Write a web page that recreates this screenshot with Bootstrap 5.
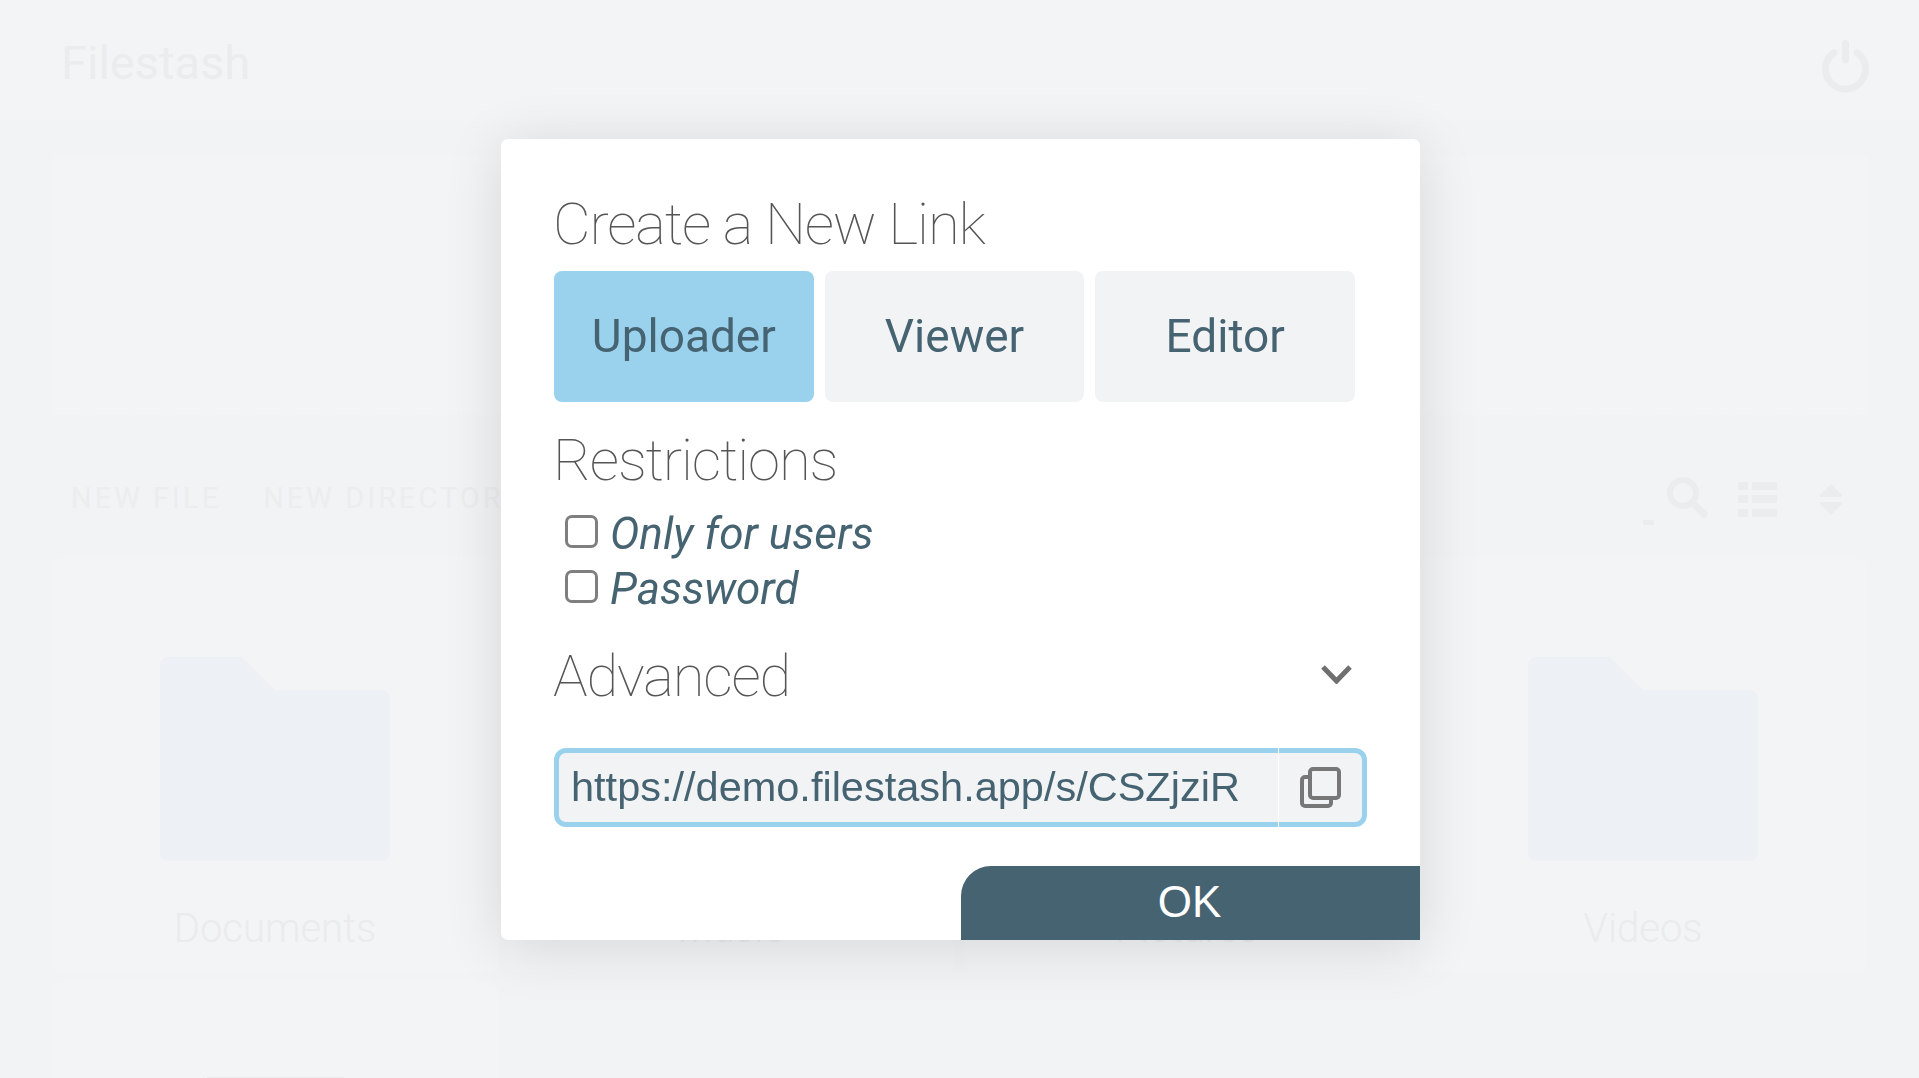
<!DOCTYPE html>
<html lang="en">
<head>
    <meta charset="UTF-8">
    <meta name="viewport" content="width=device-width, initial-scale=1.0">
    <title>Filestash</title>
    <link rel="stylesheet" href="https://cdn.jsdelivr.net/npm/bootstrap@5.3.0/dist/css/bootstrap.min.css">
    <style>
        html, body { height: 100%; overflow: hidden; }
        body { background: #f2f3f5; font-family: Roboto, "Liberation Sans", sans-serif; }

        /* page behind the dialog */
        .top-bar { height: 121px; padding: 3px 50px 0 61px; background: #f3f4f6; color: #ebecee; font-size: 47px; line-height: 1; }
        .power-pic { margin-top: 8px; }
        .page-wrap { padding: 33px 48px 0 47px; }
        .drop-zone { height: 262px; margin: 0 1px 0 3px; background: #f3f4f6; border: 2px dashed #f2f3f5; border-radius: 8px; }
        .tool-row { height: 142px; padding: 68px 29px 0 24px; color: #ecedef; }
        .tool-link { font-size: 29px; letter-spacing: 3px; line-height: 1; margin-right: 42px; white-space: nowrap; }
        .dash-mark { width: 11px; height: 5px; background: #ebecee; border-radius: 1px; margin: 36px 13px 0 0; }
        .search-pic { margin: -7px 30px 0 0; }
        .list-pic { margin-top: -2px; }
        .sort-pic { margin: 0 0 0 43px; }
        .tile { height: 414px; background: #f3f4f6; border-radius: 8px; margin: 0 5px 10px; padding-top: 99px; text-align: center; color: #eaebed; font-size: 40px; font-weight: 300; line-height: 1.2; }
        .tile-low { height: 300px; padding-top: 95px; }
        .folder-pic { display: block; margin: 0 auto 44px; width: 230px; height: 204px; }
        .file-strip { height: 1px; width: 137px; margin: 0 auto; background: #e9eaec; }

        /* dialog */
        .link-modal { display: block; background: transparent; }
        .link-dialog { margin: 139px auto 0; max-width: 919px; left: 1px; }
        .link-box { height: 801px; border: 0; border-radius: 7px 7px 0 7px; background: #fff; box-shadow: 0 8px 60px rgba(0,0,0,.12); padding: 0 53px; overflow: hidden; }
        .sec-title { font-size: 58px; font-weight: 100; line-height: 59px; letter-spacing: -1.15px; color: #555; margin: 0 0 0 -1px; }
        .first-title { margin-top: 56px; }
        .tab-row { gap: 11px; margin: 17px 12px 29px 0; }
        .tab-btn { flex: 1 1 0; height: 131px; border: 0; border-radius: 8px; background: #f2f3f5; color: #466372; font-size: 46px; padding: 0; }
        .tab-btn.is-on, .tab-btn:hover { background: #9ad1ed; color: #466372; }
        .check-list { margin: 16px 0 0 11px; }
        .check-line { height: 55px; font-size: 44px; font-style: italic; color: #466372; gap: 12px; }
        .check-line input { appearance: none; width: 33px; height: 33px; border: 3px solid #7f7f7f; border-radius: 7px; background: #fff; margin: -4px 0 0; }
        .adv-head { margin: 31px 15px 0 0; }
        .adv-head svg { margin-top: -5px; }
        .url-box { margin-top: 42px; height: 79px; border: 5px solid #9ad1ed; border-radius: 12px; background: #f2f3f5; }
        .url-input { flex: 1 1 0; min-width: 0; border: 0; background: transparent; color: #466372; font-family: "Liberation Sans", sans-serif; font-size: 41.5px; padding: 0 0 0 12px; outline: 0; }
        .copy-cell { width: 84px; margin: -5px 0; border-left: 1px solid #fff; }
        .ok-btn { position: absolute; right: 0; bottom: 0; width: 459px; height: 74px; border: 0; border-radius: 30px 0 0 0; background: #466372; color: #fff; font-family: "Liberation Sans", sans-serif; font-size: 44px; line-height: 1; padding: 0 2px 2px 0; }
    </style>
</head>
<body>
    <header class="top-bar d-flex justify-content-between align-items-center">
        <span>Filestash</span>
        <svg class="power-pic" width="47" height="53" viewBox="0 0 47 53" fill="none" stroke="#ebecee" stroke-width="7" stroke-linecap="round">
            <path d="M23.500 3.500V20"/>
            <path d="M12 12.600A20 20 0 1 0 35 12.600"/>
        </svg>
    </header>

    <div class="page-wrap">
        <div class="drop-zone"></div>

        <div class="tool-row d-flex align-items-start">
            <span class="tool-link">NEW FILE</span>
            <span class="tool-link">NEW DIRECTORY</span>
            <span class="dash-mark ms-auto"></span>
            <svg class="search-pic" width="41" height="41" viewBox="0 0 41 41" fill="none" stroke="#ebecee" stroke-linecap="round">
                <circle cx="16" cy="16" r="13" stroke-width="6"/>
                <path d="M28 28l9 9" stroke-width="7"/>
            </svg>
            <svg class="list-pic" width="39" height="35" viewBox="0 0 39 35" fill="#ebecee">
                <rect y="0" width="10" height="8" rx="1"/><rect x="14" y="0" width="25" height="8" rx="1"/>
                <rect y="13" width="10" height="8" rx="1"/><rect x="14" y="13" width="25" height="8" rx="1"/>
                <rect y="27" width="10" height="8" rx="1"/><rect x="14" y="27" width="25" height="8" rx="1"/>
            </svg>
            <svg class="sort-pic" width="22" height="31" viewBox="0 0 22 31" fill="#ebecee">
                <path d="M11 0l11 11q.5 2-1 2H1q-1.500 0-1-2z"/>
                <path d="M11 31L0 20q-.5-2 1-2h20q1.500 0 1 2z"/>
            </svg>
        </div>

        <div class="row g-0">
            <div class="col-3"><div class="tile">
                <svg class="folder-pic" viewBox="0 0 230 204"><path d="M8 0h74l33 33h107a8 8 0 0 1 8 8v155a8 8 0 0 1-8 8H8a8 8 0 0 1-8-8V8a8 8 0 0 1 8-8z" fill="#edf0f4"/></svg>
                Documents
            </div></div>
            <div class="col-3"><div class="tile">
                <svg class="folder-pic" viewBox="0 0 230 204"><path d="M8 0h74l33 33h107a8 8 0 0 1 8 8v155a8 8 0 0 1-8 8H8a8 8 0 0 1-8-8V8a8 8 0 0 1 8-8z" fill="#edf0f4"/></svg>
                Music
            </div></div>
            <div class="col-3"><div class="tile">
                <svg class="folder-pic" viewBox="0 0 230 204"><path d="M8 0h74l33 33h107a8 8 0 0 1 8 8v155a8 8 0 0 1-8 8H8a8 8 0 0 1-8-8V8a8 8 0 0 1 8-8z" fill="#edf0f4"/></svg>
                Pictures
            </div></div>
            <div class="col-3"><div class="tile">
                <svg class="folder-pic" viewBox="0 0 230 204"><path d="M8 0h74l33 33h107a8 8 0 0 1 8 8v155a8 8 0 0 1-8 8H8a8 8 0 0 1-8-8V8a8 8 0 0 1 8-8z" fill="#edf0f4"/></svg>
                Videos
            </div></div>
            <div class="col-3"><div class="tile tile-low"><div class="file-strip"></div></div></div>
        </div>
    </div>

    <div class="modal link-modal" tabindex="-1">
        <div class="modal-dialog link-dialog">
            <div class="modal-content link-box">
                <h4 class="sec-title first-title">Create a New Link</h4>
                <div class="d-flex tab-row">
                    <button class="btn tab-btn is-on">Uploader</button>
                    <button class="btn tab-btn">Viewer</button>
                    <button class="btn tab-btn">Editor</button>
                </div>
                <h4 class="sec-title">Restrictions</h4>
                <div class="check-list">
                    <label class="check-line d-flex align-items-center"><input type="checkbox">Only for users</label>
                    <label class="check-line d-flex align-items-center"><input type="checkbox">Password</label>
                </div>
                <div class="adv-head d-flex justify-content-between align-items-center">
                    <h4 class="sec-title">Advanced</h4>
                    <svg width="31" height="19" viewBox="0 0 31 19" fill="none" stroke="#6f6f6f" stroke-width="5"><path d="M2 2l13.500 14L29 2"/></svg>
                </div>
                <div class="url-box d-flex align-items-stretch">
                    <input class="url-input" type="text" value="https://demo.filestash.app/s/CSZjziR">
                    <div class="copy-cell d-flex align-items-center justify-content-center">
                        <svg width="41" height="41" viewBox="0 0 41 41" fill="none" stroke="#777" stroke-width="4">
                            <rect x="10" y="2" width="29" height="29" rx="3"/>
                            <path d="M10 10H5a3 3 0 0 0-3 3v23a3 3 0 0 0 3 3h23a3 3 0 0 0 3-3v-5"/>
                        </svg>
                    </div>
                </div>
                <button class="ok-btn">OK</button>
            </div>
        </div>
    </div>

    <script src="https://cdn.jsdelivr.net/npm/bootstrap@5.3.0/dist/js/bootstrap.bundle.min.js"></script>
</body>
</html>
